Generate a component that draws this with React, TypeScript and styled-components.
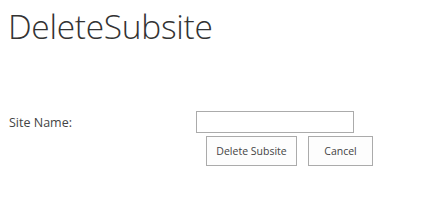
import React from "react";
import styled, { createGlobalStyle } from "styled-components";

const Global = createGlobalStyle`
  html, body { margin: 0; padding: 0; background: #fff; }
  body { font-family: "Open Sans", "Noto Sans", sans-serif; color: #444; }
`;

const Page = styled.div`
  width: 437px;
  height: 220px;
  display: flex;
  flex-direction: column;
  box-sizing: border-box;
  padding: 0 0 0 8px;
`;

const Title = styled.h1`
  margin: 0;
  padding-top: 4px;
  font-family: "Open Sans", sans-serif;
  font-weight: 300;
  font-size: 33.5px;
  line-height: 44px;
  color: #333;
  letter-spacing: -0.3px;
`;

const Form = styled.div`
  margin-top: 63px;
  display: grid;
  grid-template-columns: 188px auto;
  row-gap: 3px;
`;

const Label = styled.label`
  font-size: 12.5px;
  color: #444;
  display: flex;
  align-items: center;
  padding-left: 1px;
`;

const Input = styled.input`
  width: 158px;
  height: 22px;
  box-sizing: border-box;
  border: 1px solid #ababab;
  margin: 0;
  padding: 0 4px;
  font-family: inherit;
`;

const Buttons = styled.div`
  grid-column: 2;
  display: flex;
  gap: 11px;
  padding-left: 10px;
`;

const Button = styled.button<{ $w: number }>`
  width: ${(p) => p.$w}px;
  height: 30px;
  box-sizing: border-box;
  border: 1px solid #ababab;
  background: #fdfdfd;
  color: #444;
  font-family: "Open Sans", sans-serif;
  font-size: 10.5px;
  padding: 0;
  margin: 0;
`;

export default function App() {
  return (
    <>
      <Global />
      <Page>
        <Title>DeleteSubsite</Title>
        <Form>
          <Label>Site Name:</Label>
          <Input />
          <Buttons>
            <Button $w={91}>Delete Subsite</Button>
            <Button $w={65}>Cancel</Button>
          </Buttons>
        </Form>
      </Page>
    </>
  );
}
